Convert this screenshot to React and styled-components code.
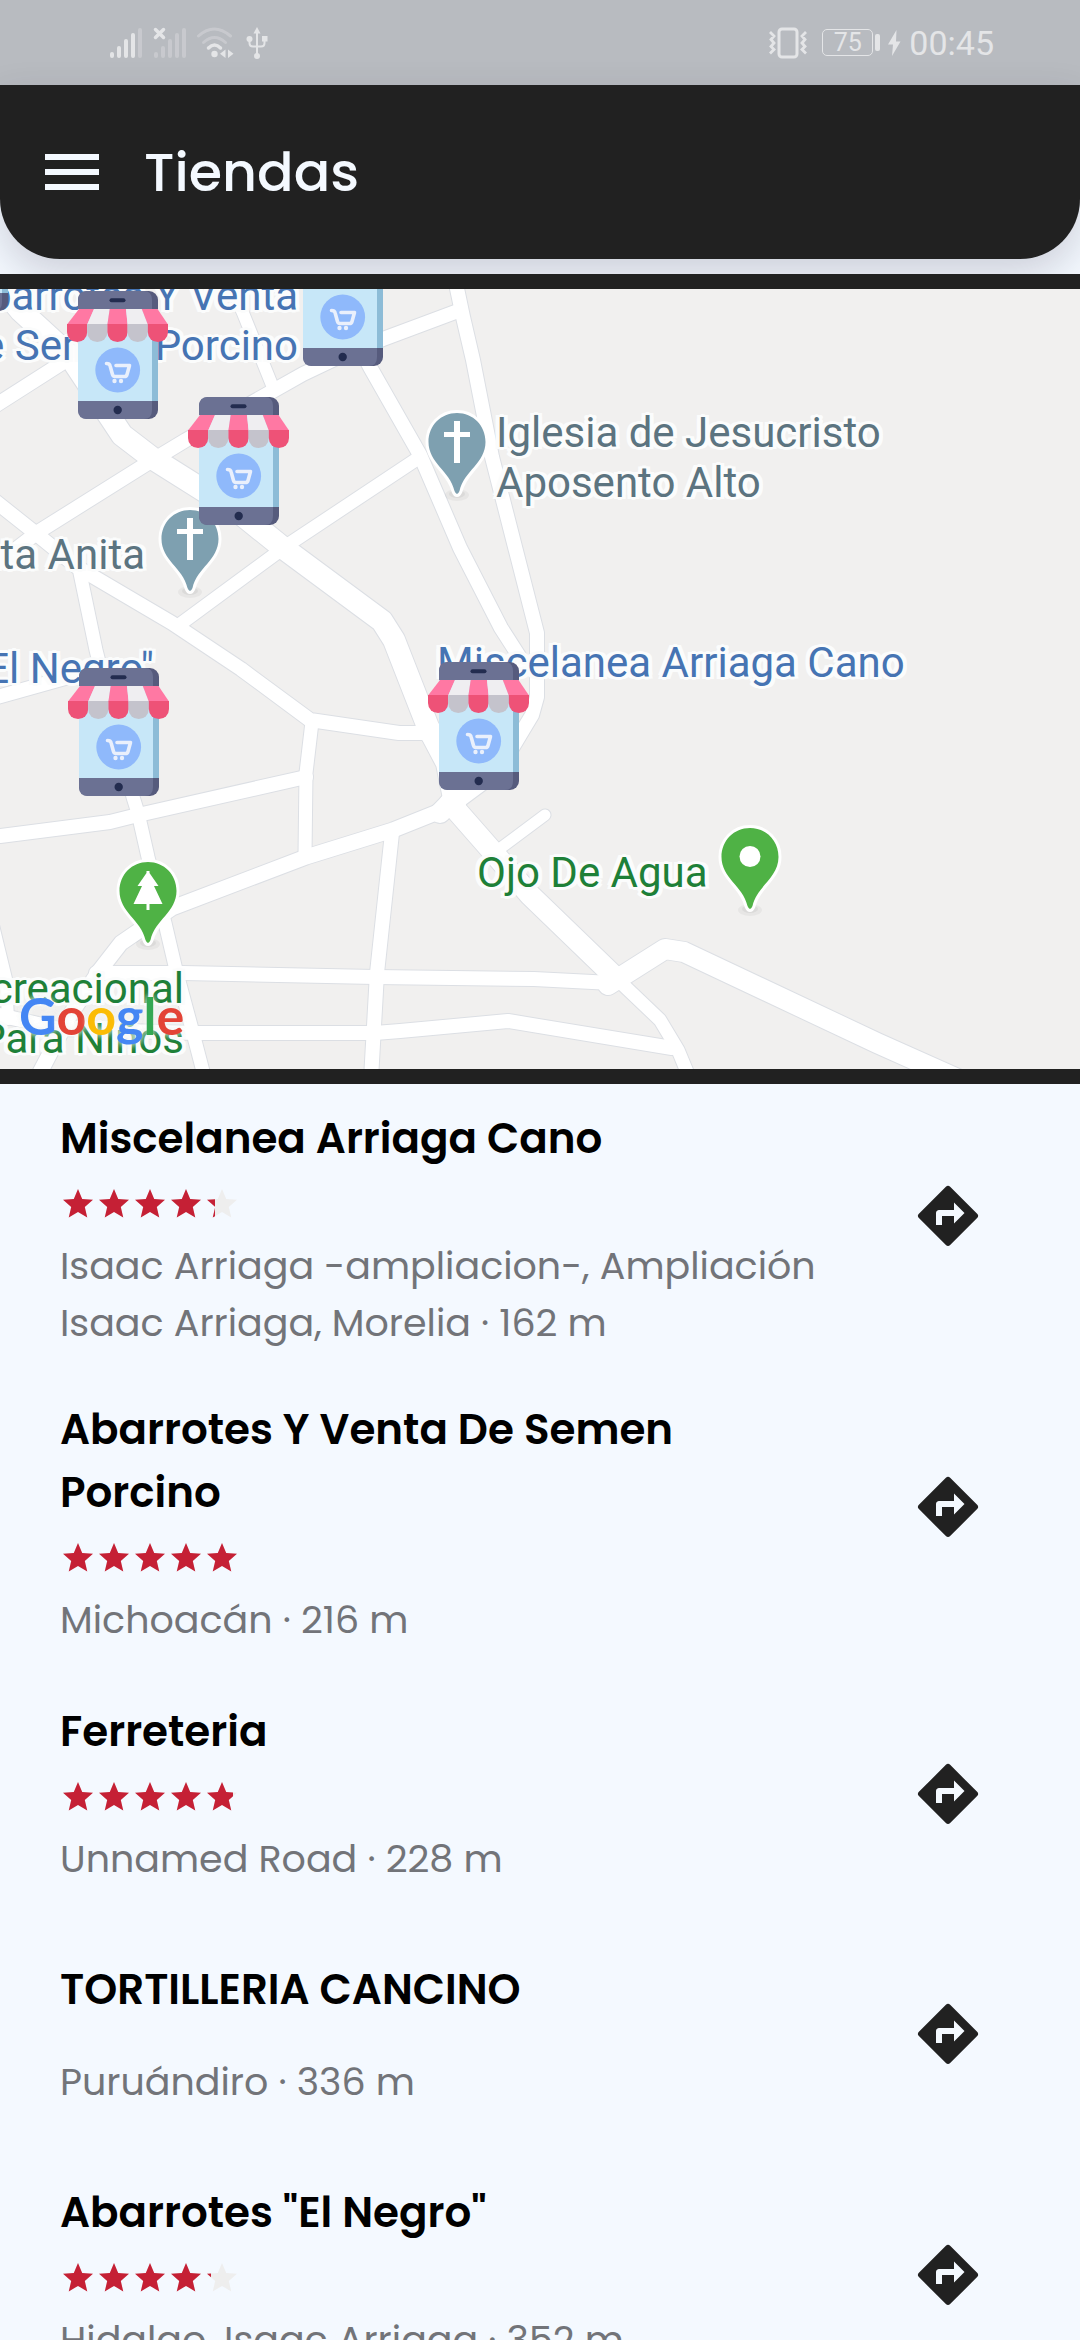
import React from "react";
import styled, { createGlobalStyle } from "styled-components";
import { MdMenu, MdStar } from "react-icons/md";

const ui = `"Poppins", Inter, "Open Sans", sans-serif`;
const mapFont = `Roboto, "Noto Sans", sans-serif`;

const GlobalStyle = createGlobalStyle`
  *, *::before, *::after { box-sizing: border-box; }
  body { margin: 0; background: #f4f9ff; }
`;

const Screen = styled.main`
  height: 100vh;
  display: flex;
  flex-direction: column;
  overflow: hidden;
  background: #f4f9ff;
  font-family: ${ui};
`;

/* ---------- status bar ---------- */

const StatusBar = styled.div`
  flex: none;
  height: 85px;
  padding: 0 86px 0 109px;
  display: flex;
  align-items: center;
  justify-content: space-between;
  background: #b8bbc0;
  color: #e4e5e7;
`;

const StatusGroup = styled.div`
  display: flex;
  align-items: center;
  gap: ${(p) => p.$gap}px;
`;

const StatusIcon = styled.svg`
  display: block;
  flex: none;
`;

const Battery = styled.span`
  display: flex;
  align-items: center;
  gap: 2px;
`;

const BatteryCase = styled.span`
  width: 51px;
  height: 27px;
  border: 1px solid currentColor;
  border-radius: 5px;
  font: 400 25px/25px ${mapFont};
  text-align: center;
`;

const BatteryTip = styled.span`
  width: 5px;
  height: 17px;
  border-radius: 2px;
  background: currentColor;
`;

const Clock = styled.time`
  font: 400 34px/40px ${mapFont};
`;

function SignalBars({ filled, crossed }) {
  const heights = [6, 12, 19, 25, 30];
  return (
    <StatusIcon width="34" height="32" viewBox="0 0 34 32" fill="currentColor" aria-hidden="true">
      {heights.map((h, i) => (
        <rect key={h} x={1 + i * 7} y={31 - h} width="4" height={h} rx="2" opacity={i < filled ? 1 : 0.35} />
      ))}
      {crossed && <path d="M2.5 2.500l8 8m0-8l-8 8" stroke="currentColor" strokeWidth="3.500" strokeLinecap="round" />}
    </StatusIcon>
  );
}

function WifiIcon() {
  return (
    <StatusIcon width="38" height="32" viewBox="0 0 38 32" fill="none" stroke="currentColor" strokeLinecap="round" aria-hidden="true">
      <path d="M1.500 9Q17-5 33.500 9" strokeWidth="3" opacity=".35" />
      <path d="M6.500 15.500Q17.500 5.500 28.500 15.500" strokeWidth="3" opacity=".35" />
      <path d="M11.500 21Q17.500 15 23.500 21" strokeWidth="3.500" />
      <circle cx="17.500" cy="27" r="3.200" fill="currentColor" stroke="none" />
      <path d="M28.500 22.500v8.500l-5.500-4.250zM31 22.500v8.500l5.500-4.250z" fill="currentColor" stroke="none" />
    </StatusIcon>
  );
}

function UsbIcon() {
  return (
    <StatusIcon width="24" height="34" viewBox="0 0 24 34" fill="none" stroke="currentColor" strokeWidth="2" aria-hidden="true">
      <path d="M12 5v25M4.500 13v4q0 3.500 3.500 3.500h8q3.500 0 3.500-3.500v-4" />
      <path d="M12 1l3.500 6.500h-7z" fill="currentColor" stroke="none" />
      <circle cx="12" cy="30" r="3" fill="currentColor" stroke="none" />
      <circle cx="4.500" cy="13" r="3" fill="currentColor" stroke="none" />
      <rect x="17" y="10" width="5.500" height="5.500" fill="currentColor" stroke="none" />
    </StatusIcon>
  );
}

function VibrateIcon() {
  return (
    <StatusIcon width="40" height="32" viewBox="0 0 40 32" fill="none" stroke="currentColor" strokeWidth="3" aria-hidden="true">
      <rect x="11" y="2" width="18" height="28" rx="3" />
      <path d="M2 5l4 4-3 3.500 3 3.500-3 3.500 3 3-4 4M38 5l-4 4 3 3.500-3 3.500 3 3.500-3 3 4 4" strokeWidth="2.800" />
    </StatusIcon>
  );
}

function BoltIcon() {
  return (
    <StatusIcon width="13" height="26" viewBox="0 0 13 26" fill="currentColor" aria-hidden="true">
      <path d="M8.500 0L0 14.500h5L4 26l8.500-14.500H8z" />
    </StatusIcon>
  );
}

/* ---------- header ---------- */

const Header = styled.header`
  flex: none;
  height: 174px;
  padding: 0 36px;
  display: flex;
  align-items: center;
  gap: 36px;
  background: #212121;
  color: #f4f9ff;
  border-radius: 0 0 60px 60px;
  box-shadow: 0 16px 40px rgba(40, 35, 60, 0.19);
`;

const MenuButton = styled.button`
  display: flex;
  padding: 0;
  border: 0;
  background: none;
  color: inherit;
  font-size: 72px;
`;

const Title = styled.h1`
  margin: 0;
  font-size: 54px;
  line-height: 72px;
  font-weight: 500;
`;

/* ---------- map ---------- */

const MapFrame = styled.section`
  position: relative;
  flex: none;
  height: 810px;
  margin-top: 15px;
  border: solid #212121;
  border-width: 15px 0;
  background: #f1f0ef;
  overflow: hidden;
`;

const MapCanvas = styled.svg`
  display: block;
  position: absolute;
  left: 0;
  top: 0;
  width: 1080px;
  height: 780px;
`;

const MapLabel = styled.span`
  position: absolute;
  top: ${(p) => p.$y - 39}px;
  ${(p) => (p.$end ? `right: calc(100% - ${p.$x}px); text-align: right;` : `left: ${p.$x}px;`)}
  color: ${(p) => p.$color};
  font: 400 42px/50px ${mapFont};
  white-space: pre;
  text-shadow: 3px 0 #fbfcfc, -3px 0 #fbfcfc, 0 3px #fbfcfc, 0 -3px #fbfcfc,
    2px 2px #fbfcfc, -2px 2px #fbfcfc, 2px -2px #fbfcfc, -2px -2px #fbfcfc,
    4px 2px #fbfcfc, -4px 2px #fbfcfc, 4px -2px #fbfcfc, -4px -2px #fbfcfc;
`;

const StorePin = styled.button`
  position: absolute;
  left: ${(p) => p.$x}px;
  top: ${(p) => p.$y}px;
  padding: 0;
  border: 0;
  background: none;

  svg { display: block; }
`;

const GoogleMark = styled.span`
  position: absolute;
  left: 19px;
  top: 694px;
  font: 700 52px/64px Lato, sans-serif;
  text-shadow: 0 0 6px rgba(245, 248, 246, 0.7), 0 0 6px rgba(245, 248, 246, 0.7);
`;

const Letter = styled.span`
  color: ${(p) => p.$color};
`;

const ROADS = [
  ["-10,-16 21,22 69,66 122,146 152,169 241,225 282,258 382,332 394,351 428,438 447,474 455,514", 22],
  ["440,524 480,483", 20],
  ["450,514 493,563 530,606 617,690", 21],
  ["608,696 665,660 684,663 877,754 980,800", 20],
  ["617,690 660,731 678,761 690,790", 13],
  ["-10,208 34,243 77,278 172,334 241,380 310,431 399,444 425,444 446,464 452,490", 14],
  ["-10,120 62,74", 14],
  ["-10,280 38,243 148,174 186,151 303,85 345,65 383,50 458,22", 14],
  ["227,-12 243,24 272,96", 12],
  ["345,30 370,78 420,166 460,259 501,339 526,378", 14],
  ["455,-10 463,28 473,71 492,168 537,344 537,408 532,426 508,466 487,491 456,514", 14],
  ["420,168 289,255 179,336", 13],
  ["80,284 96,361 133,508 138,524 148,568 165,634 176,681 193,744 205,790", 13],
  ["-10,410 65,389 102,376", 14],
  ["-10,548 0,547 110,533 138,526 306,488", 14],
  ["312,433 306,484 305,566", 13],
  ["448,519 393,541 306,568 172,619 121,654 100,681 70,726 34,795", 15],
  ["96,684 183,684 375,688 534,690 612,694", 14],
  ["392,544 377,684 371,790", 14],
  ["-10,724 60,740 196,744 375,744 400,742 508,732 672,759", 14],
  ["-10,624 6,690 8,730", 12],
  ["545,526 494,564", 11],
];

function Roads() {
  const draw = (stroke, extra) =>
    ROADS.map(([points, width]) => (
      <polyline key={points} points={points} stroke={stroke} strokeWidth={width + extra} />
    ));
  return (
    <g fill="none" strokeLinejoin="round" strokeLinecap="round">
      {draw("#dcdfe4", 2)}
      {draw("#ffffff", 0)}
    </g>
  );
}

function PlacePin({ x, y, color, kind }) {
  return (
    <g transform={`translate(${x} ${y})`}>
      <ellipse cx="0" cy="82" rx="12" ry="6" fill="#000" opacity=".04" />
      <ellipse cx="0" cy="81" rx="8" ry="4" fill="#000" opacity=".05" />
      <path
        d="M0 0C16 0 28.500 12.500 28.500 29C28.500 50 7 58 2.500 78Q0 84-2.500 78C-7 58-28.500 50-28.500 29C-28.500 12.500-16 0 0 0Z"
        fill={color}
        stroke="#fff"
        strokeWidth="6"
        paintOrder="stroke"
      />
      {kind === "church" && <path d="M-3 8h6v11h10v5h-10v26h-6v-26h-10v-5h10z" fill="#fff" />}
      {kind === "park" && (
        <path d="M-1.500 9h3v2l9 13h-4.500l8.500 18h-13v6h-3v-6h-13l8.500-18h-4.500l9-13z" fill="#fff" />
      )}
      {kind === "place" && <circle cx="0" cy="28.500" r="10.500" fill="#fff" />}
    </g>
  );
}

function StoreIcon() {
  const lower = [0, 20.2, 40.4, 60.6, 80.8];
  const upper = [12, 27, 42.7, 59, 74.8, 90.5];
  return (
    <svg width="102" height="128" viewBox="0 0 102 128" aria-hidden="true">
      <rect x="11" y="0" width="80" height="128" rx="9" fill="#565b7d" />
      <path d="M20 0H77Q85 0 85 9V119Q85 128 77 128H20Q11 128 11 119V9Q11 0 20 0Z" fill="#6b7193" />
      <rect x="11" y="18" width="80" height="92" fill="#8dbcd7" />
      <rect x="11" y="18" width="74" height="92" fill="#c7e7f8" />
      <rect x="42.500" y="7.200" width="16" height="4" rx="2" fill="#232c4f" />
      <circle cx="50.700" cy="119" r="4.200" fill="#232c4f" />
      {lower.map((x, i) => (
        <g key={x}>
          <path
            d={`M${upper[i]} 18H${upper[i + 1]}L${x + 20.2} 33.500H${x}Z`}
            fill={i % 2 ? "#efeef1" : "#ff78a3"}
          />
          <path
            d={`M${x} 33h20.200v8a10.100 10.100 0 0 1-20.200 0z`}
            fill={i % 2 ? "#c4c3cc" : "#ee5277"}
          />
        </g>
      ))}
      <circle cx="50.700" cy="79" r="22.400" fill="#8fb9fb" />
      <path
        d="M39.500 72.500q3 0 3.500 2l2.500 9q.7 2 2.500 2h9.500q2 0 2.500-2l2.500-9h-13.500"
        fill="none"
        stroke="#eaf0fc"
        strokeWidth="3.600"
        strokeLinecap="round"
        strokeLinejoin="round"
      />
      <circle cx="47.500" cy="90" r="2.200" fill="#eaf0fc" />
      <circle cx="54" cy="90" r="2.200" fill="#eaf0fc" />
    </svg>
  );
}

const BLUE = "#4674b3";
const SLATE = "#5c7480";
const GREEN = "#1e8038";

const LABELS = [
  { text: "Abarrotes Y Venta\nDe Semen Porcino", x: 298, y: 21, color: BLUE, end: true },
  { text: "Santa Anita", x: 145, y: 280, color: SLATE, end: true },
  { text: 'Abarrotes "El Negro"', x: 154, y: 394, color: BLUE, end: true },
  { text: "Recreacional\nPara Niños", x: 184, y: 714, color: GREEN, end: true },
  { text: "Iglesia de Jesucristo\nAposento Alto", x: 496, y: 158, color: SLATE },
  { text: "Miscelanea Arriaga Cano", x: 437, y: 388, color: BLUE },
  { text: "Ojo De Agua", x: 477, y: 598, color: GREEN },
];

const PLACES = [
  { x: 457, y: 124, color: "#7ea0b0", kind: "church" },
  { x: 190, y: 221, color: "#7ea0b0", kind: "church" },
  { x: 148, y: 573, color: "#4fb245", kind: "park" },
  { x: 750, y: 539, color: "#4fb245", kind: "place" },
];

const STORE_PINS = [
  { x: -83, y: -106, name: "Tienda" },
  { x: 67, y: 2, name: "Abarrotes Y Venta De Semen Porcino" },
  { x: 188, y: 108, name: "Ferreteria" },
  { x: 292, y: -51, name: "TORTILLERIA CANCINO" },
  { x: 68, y: 379, name: 'Abarrotes "El Negro"' },
  { x: 428, y: 373, name: "Miscelanea Arriaga Cano" },
];

const GOOGLE = [
  ["G", "#4486f4"],
  ["o", "#e34336"],
  ["o", "#fbbc05"],
  ["g", "#4486f4"],
  ["l", "#34a853"],
  ["e", "#e34336"],
];

/* ---------- store list ---------- */

const StoreList = styled.ul`
  flex: 1;
  min-height: 0;
  margin: 0;
  padding: 23px 96px 0 60px;
  list-style: none;
  overflow-y: auto;
  scrollbar-width: none;
`;

const StoreRow = styled.li`
  display: flex;
  align-items: ${(p) => (p.$wrapped ? "flex-start" : "center")};
  justify-content: space-between;
  gap: 80px;
  margin-bottom: ${(p) => p.$space}px;
`;

const StoreInfo = styled.div`
  flex: 1;
  display: flex;
  flex-direction: column;
`;

const StoreName = styled.h2`
  margin: 0;
  color: #000;
  font-size: 42px;
  line-height: 63px;
  font-weight: 600;
`;

const StoreAddress = styled.p`
  margin: 0;
  color: #727479;
  font-size: 38px;
  line-height: 57px;
`;

const Rating = styled.div`
  height: 36px;
  margin: 16px 0 15px;
  display: grid;
  justify-content: start;
`;

const NoRating = styled.div`
  height: 32px;
`;

const Stars = styled.span`
  grid-area: 1 / 1;
  display: flex;
  font-size: 36px;
  color: ${(p) => p.$color};
  overflow: hidden;

  svg { flex: none; }
`;

const RouteButton = styled.button`
  flex: none;
  display: flex;
  margin: ${(p) => (p.$wrapped ? "73px 0 0" : "0")};
  padding: 0;
  border: 0;
  background: none;
  color: #212121;
`;

function RouteIcon() {
  return (
    <svg width="72" height="72" viewBox="0 0 24 24" fill="currentColor" aria-hidden="true">
      <path d="M21.710 11.290l-9-9a.996.996 0 0 0-1.410 0l-9 9a.996.996 0 0 0 0 1.410l9 9c.39.39 1.020.39 1.410 0l9-9a.996.996 0 0 0 0-1.410zM14 14.500V12h-4v3H8v-4c0-.55.45-1 1-1h5V7.500l3.500 3.500-3.500 3.500z" />
    </svg>
  );
}

const five = [0, 1, 2, 3, 4];

function StarRating({ value }) {
  return (
    <Rating role="img" aria-label={`${value} / 5`}>
      <Stars $color="#eeeeee">{five.map((i) => <MdStar key={i} />)}</Stars>
      <Stars $color="#c52035" style={{ width: `${value * 20}%` }}>
        {five.map((i) => <MdStar key={i} />)}
      </Stars>
    </Rating>
  );
}

const STORES = [
  {
    name: "Miscelanea Arriaga Cano",
    rating: 4.3,
    address: "Isaac Arriaga -ampliacion-, Ampliación Isaac Arriaga, Morelia · 162 m",
    wrapped: true,
    space: 47,
  },
  { name: "Abarrotes Y Venta De Semen Porcino", rating: 5, address: "Michoacán · 216 m", wrapped: true, space: 52 },
  { name: "Ferreteria", rating: 4.8, address: "Unnamed Road · 228 m", space: 71 },
  { name: "TORTILLERIA CANCINO", address: "Puruándiro · 336 m", space: 71 },
  { name: 'Abarrotes "El Negro"', rating: 4.2, address: "Hidalgo, Isaac Arriaga · 352 m", space: 71 },
];

export default function App() {
  return (
    <Screen>
      <GlobalStyle />
      <StatusBar>
        <StatusGroup $gap={10}>
          <SignalBars filled={4} />
          <SignalBars filled={0} crossed />
          <WifiIcon />
          <UsbIcon />
        </StatusGroup>
        <StatusGroup $gap={14}>
          <VibrateIcon />
          <StatusGroup $gap={8}>
            <Battery>
              <BatteryCase>75</BatteryCase>
              <BatteryTip />
            </Battery>
            <BoltIcon />
            <Clock>00:45</Clock>
          </StatusGroup>
        </StatusGroup>
      </StatusBar>

      <Header>
        <MenuButton aria-label="Menú">
          <MdMenu />
        </MenuButton>
        <Title>Tiendas</Title>
      </Header>

      <MapFrame aria-label="Mapa">
        <MapCanvas viewBox="0 0 1080 780" aria-hidden="true">
          <Roads />
        </MapCanvas>
        {LABELS.map((l) => (
          <MapLabel key={l.text} $x={l.x} $y={l.y} $color={l.color} $end={l.end}>
            {l.text}
          </MapLabel>
        ))}
        <MapCanvas viewBox="0 0 1080 780" aria-hidden="true">
          {PLACES.map((p) => (
            <PlacePin key={p.x} {...p} />
          ))}
        </MapCanvas>
        {STORE_PINS.map((p) => (
          <StorePin key={p.x} $x={p.x} $y={p.y} aria-label={p.name}>
            <StoreIcon />
          </StorePin>
        ))}
        <GoogleMark>
          {GOOGLE.map(([char, color], i) => (
            <Letter key={i} $color={color}>{char}</Letter>
          ))}
        </GoogleMark>
      </MapFrame>

      <StoreList>
        {STORES.map((s) => (
          <StoreRow key={s.name} $wrapped={s.wrapped} $space={s.space}>
            <StoreInfo>
              <StoreName>{s.name}</StoreName>
              {s.rating ? <StarRating value={s.rating} /> : <NoRating />}
              <StoreAddress>{s.address}</StoreAddress>
            </StoreInfo>
            <RouteButton $wrapped={s.wrapped} aria-label={`Cómo llegar a ${s.name}`}>
              <RouteIcon />
            </RouteButton>
          </StoreRow>
        ))}
      </StoreList>
    </Screen>
  );
}
